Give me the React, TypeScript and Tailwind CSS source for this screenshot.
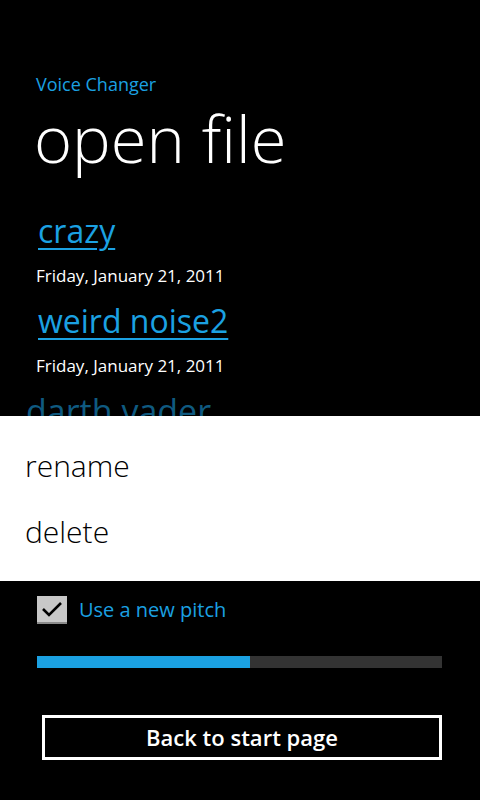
import React from "react";

function Link({ children }: { children: React.ReactNode }) {
  return (
    <div className="pl-[38px] h-[48px] leading-[48px] text-[32px] text-[#1ba1e2]">
      <span className="underline decoration-2 underline-offset-[5px]">{children}</span>
    </div>
  );
}

function DateLine({ children }: { children: React.ReactNode }) {
  return (
    <div className="pl-[36px] h-[42px] leading-[42px] text-[17px] text-white">{children}</div>
  );
}

export default function App() {
  return (
    <div
      className="relative w-[480px] h-[800px] bg-black overflow-hidden"
      style={{ fontFamily: '"Open Sans", "Noto Sans", sans-serif' }}
    >
      <div className="pl-[36px] pt-[72px]">
        <div className="text-[18px] leading-[24px] text-[#1ba1e2]">Voice Changer</div>
        <div className="-ml-[2px] text-[65px] leading-[84px] font-light text-white">open file</div>
      </div>

      <div className="h-[410px] overflow-hidden pt-[27px]">
        <Link>crazy</Link>
        <DateLine>Friday, January 21, 2011</DateLine>
        <Link>weird noise2</Link>
        <DateLine>Friday, January 21, 2011</DateLine>
        <div className="pl-[26px] h-[48px] leading-[48px] text-[34px] text-[#0f5a80]">darth vader</div>
      </div>

      <div className="flex items-center gap-[12px] pl-[37px] h-[40px]">
        <div className="flex h-[28px] w-[30px] items-center justify-center bg-[#c8c8c8] border-b-[2px] border-[#8a8a8a]">
          <svg width="22" height="18" viewBox="0 0 22 18">
            <path d="M2 9 L8 15 L20 3" fill="none" stroke="#000" strokeWidth="2.6" />
          </svg>
        </div>
        <div className="text-[20px] text-[#1ba1e2]">Use a new pitch</div>
      </div>

      <div className="mx-[37px] mt-[26px] flex h-[12px] w-[405px] bg-[#333333]">
        <div className="h-full w-[213px] bg-[#1ba1e2]" />
      </div>

      <div className="mx-[42px] mt-[47px] flex h-[45px] w-[400px] items-center justify-center border-[3px] border-white">
        <span className="text-[22px] font-semibold text-white">Back to start page</span>
      </div>

      <div className="absolute left-0 top-[416px] w-[480px] h-[165px] bg-white pl-[25px] pt-[24px]">
        <div className="h-[66px] leading-[52px] text-[30px] font-light text-black">rename</div>
        <div className="h-[66px] leading-[52px] text-[30px] font-light text-black">delete</div>
      </div>
    </div>
  );
}
